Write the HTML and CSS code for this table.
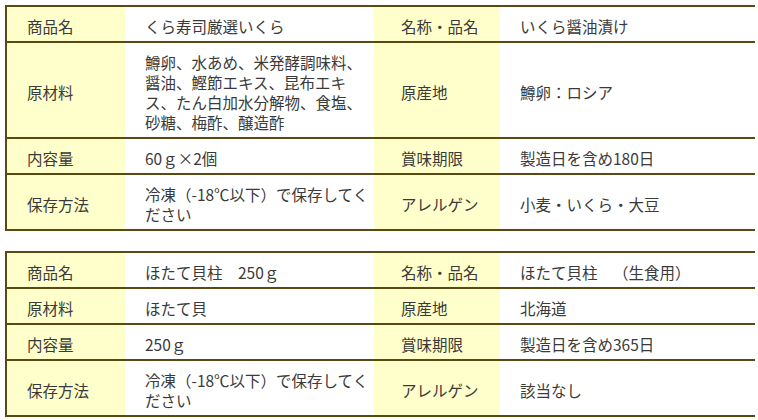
FILE: index.html
```
<!DOCTYPE html>
<html lang="ja">
<head>
<meta charset="utf-8">
<link rel="stylesheet" href="styles.css">
</head>
<body>
<table class="spec">
  <colgroup><col class="c-l1"><col class="c-v1"><col class="c-l2"><col class="c-v2"></colgroup>
  <tr>
    <th class="lab">商品名</th><td class="val">くら寿司厳選いくら</td>
    <th class="lab lab2">名称・品名</th><td class="val">いくら醤油漬け</td>
  </tr>
  <tr>
    <th class="lab">原材料</th><td class="val">鱒卵、水あめ、米発酵調味料、醤油、鰹節エキス、昆布エキス、たん白加水分解物、食塩、砂糖、梅酢、醸造酢</td>
    <th class="lab lab2">原産地</th><td class="val">鱒卵：ロシア</td>
  </tr>
  <tr>
    <th class="lab">内容量</th><td class="val">60ｇ×2個</td>
    <th class="lab lab2">賞味期限</th><td class="val">製造日を含め180日</td>
  </tr>
  <tr>
    <th class="lab">保存方法</th><td class="val">冷凍（-18℃以下）で保存してください</td>
    <th class="lab lab2">アレルゲン</th><td class="val">小麦・いくら・大豆</td>
  </tr>
</table>
<table class="spec">
  <colgroup><col class="c-l1"><col class="c-v1"><col class="c-l2"><col class="c-v2"></colgroup>
  <tr>
    <th class="lab">商品名</th><td class="val">ほたて貝柱　250ｇ</td>
    <th class="lab lab2">名称・品名</th><td class="val">ほたて貝柱　（生食用）</td>
  </tr>
  <tr>
    <th class="lab">原材料</th><td class="val">ほたて貝</td>
    <th class="lab lab2">原産地</th><td class="val">北海道</td>
  </tr>
  <tr>
    <th class="lab">内容量</th><td class="val">250ｇ</td>
    <th class="lab lab2">賞味期限</th><td class="val">製造日を含め365日</td>
  </tr>
  <tr>
    <th class="lab">保存方法</th><td class="val">冷凍（-18℃以下）で保存してください</td>
    <th class="lab lab2">アレルゲン</th><td class="val">該当なし</td>
  </tr>
</table>
</body>
</html>
```

FILE: styles.css
```
html, body {
  background: #ffffff;
}
body {
  margin: 5px 3px 0 5px;
  font-family: "Noto Sans CJK JP", "Noto Sans", sans-serif;
  font-size: 15.5px;
  color: #3a3a3a;
  text-spacing-trim: space-all;
}
.spec {
  width: 750px;
  table-layout: fixed;
  border-collapse: collapse;
  border: 2px solid #5a4a12;
  margin-bottom: 20px;
}
.c-l1 { width: 119px; }
.c-v1 { width: 249px; }
.c-l2 { width: 126px; }
.c-v2 { width: 256px; }
.spec tr {
  border-bottom: 2px solid #5a4a12;
}
.lab, .val {
  padding: 9px 4px 5px 20px;
  line-height: 20px;
  text-align: left;
  vertical-align: middle;
  font-weight: normal;
}
.lab {
  background: #ffffcc;
}
.lab2 {
  padding-left: 27px;
  padding-right: 0;
}
.val {
  background: #ffffff;
}
```
